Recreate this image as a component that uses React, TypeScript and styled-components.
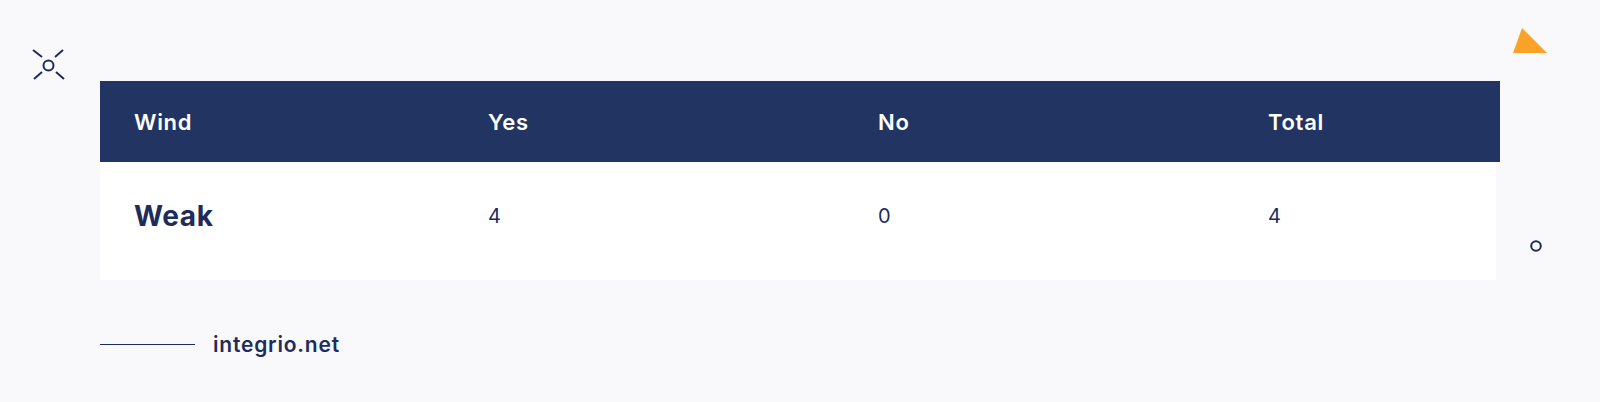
import styled, { createGlobalStyle } from 'styled-components';

const GlobalStyle = createGlobalStyle`
  html, body {
    margin: 0;
    padding: 0;
    background: #f9f9fc;
  }
  body {
    font-family: Inter, "Open Sans", sans-serif;
  }
`;

// whole canvas
const Page = styled.div`
  position: relative;
  width: 1600px;
  height: 402px;
  box-sizing: border-box;
  padding: 81px 100px 0 100px;
  background: #f9f9fc;
  overflow: hidden;
`;

const Table = styled.div`
  width: 1400px;
  display: flex;
  flex-direction: column;
`;

const Row = styled.div<{ $head?: boolean }>`
  display: grid;
  grid-template-columns: 354px 390px 390px 1fr;
  align-items: center;
  box-sizing: border-box;
  height: ${(p) => (p.$head ? '81px' : '118px')};
  padding: ${(p) => (p.$head ? '0' : '0 0 10px 0')};
  margin-right: ${(p) => (p.$head ? '0' : '4px')};
  background: ${(p) => (p.$head ? '#223461' : '#ffffff')};
`;

const HeadCell = styled.div`
  padding-left: 34px;
  color: #ffffff;
  font-size: 22px;
  font-weight: 600;
  letter-spacing: 0.7px;
`;

const Cell = styled.div<{ $label?: boolean }>`
  padding-left: 34px;
  color: #1d2c5b;
  font-size: ${(p) => (p.$label ? '28px' : '20px')};
  font-weight: ${(p) => (p.$label ? 700 : 400)};
  letter-spacing: ${(p) => (p.$label ? '0.6px' : '0')};
`;

const Footer = styled.div`
  display: flex;
  align-items: center;
  gap: 18px;
  margin-top: 52px;
`;

const Rule = styled.div`
  width: 95px;
  height: 1px;
  background: #1d2c5b;
`;

const Brand = styled.div`
  color: #1d2c5b;
  font-size: 21px;
  font-weight: 600;
  letter-spacing: 0.8px;
`;

// decorative shapes floating on the canvas
const Deco = styled.svg<{ $x: number; $y: number }>`
  position: absolute;
  left: ${(p) => p.$x}px;
  top: ${(p) => p.$y}px;
`;

const data = [{ wind: 'Weak', yes: 4, no: 0, total: 4 }];

const App = () => (
  <>
    <GlobalStyle />
    <Page>
      <Deco $x={30} $y={47} width="38" height="36" viewBox="0 0 38 36">
        <g stroke="#1d2c5b" strokeWidth="2" fill="none" strokeLinecap="butt">
          <circle cx="18.5" cy="18.5" r="5" />
          <line x1="3" y1="3" x2="12" y2="10" />
          <line x1="33" y1="3" x2="25" y2="10" />
          <line x1="4" y1="32" x2="12" y2="25" />
          <line x1="26" y1="25" x2="34" y2="32" />
        </g>
      </Deco>
      <Deco $x={1510} $y={26} width="40" height="30" viewBox="0 0 40 30">
        <polygon points="12,2 3,27 37,27" fill="#fba227" />
      </Deco>
      <Deco $x={1528} $y={238} width="16" height="16" viewBox="0 0 16 16">
        <circle cx="8" cy="8" r="4.8" stroke="#1d2c5b" strokeWidth="2" fill="none" />
      </Deco>

      <Table>
        <Row $head>
          <HeadCell>Wind</HeadCell>
          <HeadCell>Yes</HeadCell>
          <HeadCell>No</HeadCell>
          <HeadCell>Total</HeadCell>
        </Row>
        {data.map((d) => (
          <Row key={d.wind}>
            <Cell $label>{d.wind}</Cell>
            <Cell>{d.yes}</Cell>
            <Cell>{d.no}</Cell>
            <Cell>{d.total}</Cell>
          </Row>
        ))}
      </Table>

      <Footer>
        <Rule />
        <Brand>integrio.net</Brand>
      </Footer>
    </Page>
  </>
);

export default App;
